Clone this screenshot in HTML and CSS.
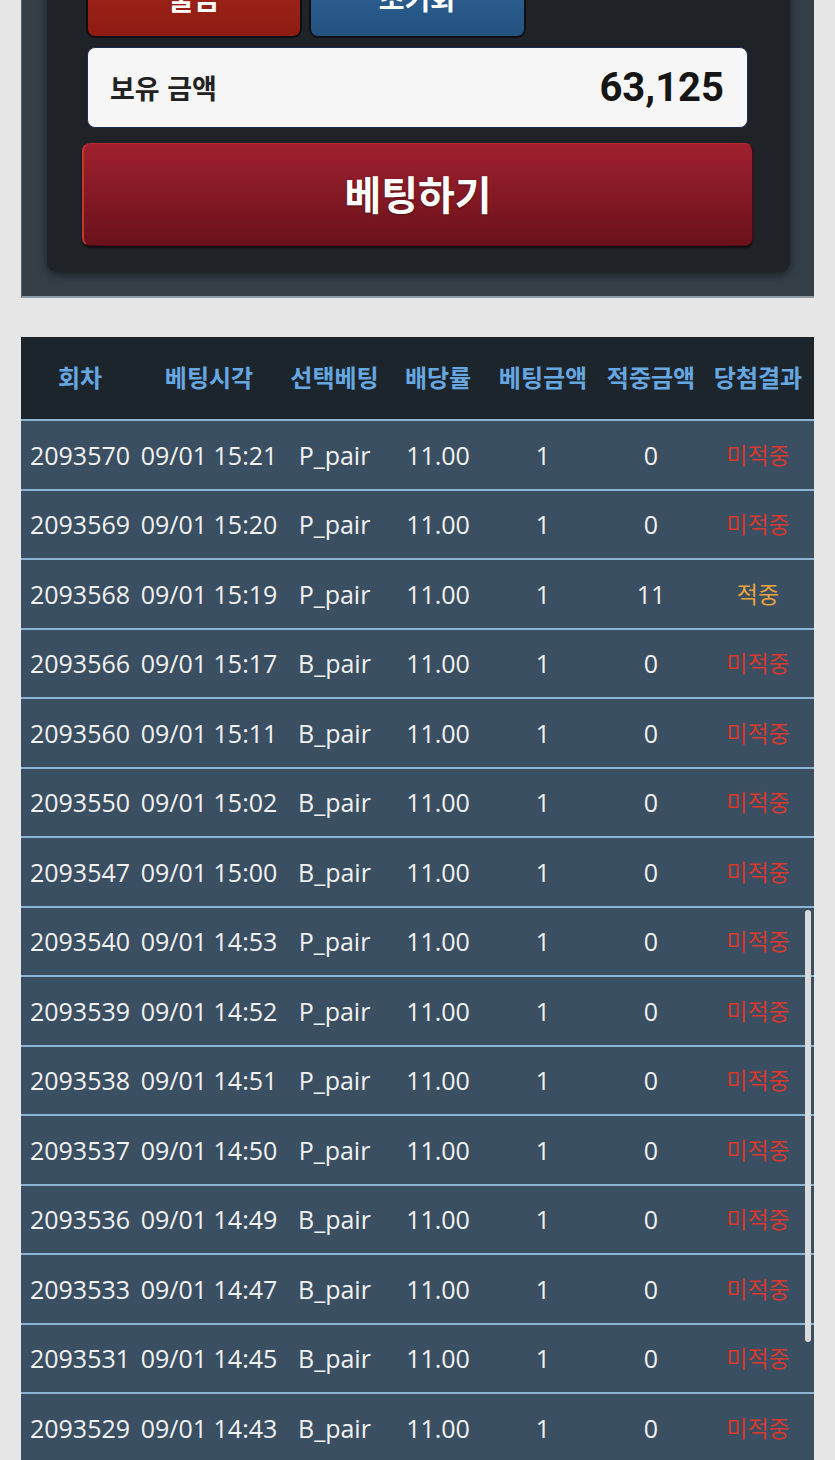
FILE: index.html
```html
<!DOCTYPE html>
<html lang="ko">
<head>
<meta charset="utf-8">
<title>베팅</title>
<link rel="stylesheet" href="styles.css">
</head>
<body>
<div class="page">
  <section class="panel-outer">
    <div class="panel-inner">
      <div class="btn-row">
        <button class="btn btn-red">출금</button>
        <button class="btn btn-blue">초기화</button>
      </div>
      <div class="balance">
        <span class="balance-label">보유 금액</span>
        <span class="balance-amount">63,125</span>
      </div>
      <button class="bet-btn">베팅하기</button>
    </div>
  </section>

  <section class="history">
    <div class="row head">
      <div>회차</div><div>베팅시각</div><div>선택베팅</div><div>배당률</div><div>베팅금액</div><div>적중금액</div><div>당첨결과</div>
    </div>
    <div class="row"><div>2093570</div><div>09/01 15:21</div><div>P_pair</div><div>11.00</div><div>1</div><div>0</div><div class="lose">미적중</div></div>
    <div class="row"><div>2093569</div><div>09/01 15:20</div><div>P_pair</div><div>11.00</div><div>1</div><div>0</div><div class="lose">미적중</div></div>
    <div class="row"><div>2093568</div><div>09/01 15:19</div><div>P_pair</div><div>11.00</div><div>1</div><div>11</div><div class="win">적중</div></div>
    <div class="row"><div>2093566</div><div>09/01 15:17</div><div>B_pair</div><div>11.00</div><div>1</div><div>0</div><div class="lose">미적중</div></div>
    <div class="row"><div>2093560</div><div>09/01 15:11</div><div>B_pair</div><div>11.00</div><div>1</div><div>0</div><div class="lose">미적중</div></div>
    <div class="row"><div>2093550</div><div>09/01 15:02</div><div>B_pair</div><div>11.00</div><div>1</div><div>0</div><div class="lose">미적중</div></div>
    <div class="row"><div>2093547</div><div>09/01 15:00</div><div>B_pair</div><div>11.00</div><div>1</div><div>0</div><div class="lose">미적중</div></div>
    <div class="row"><div>2093540</div><div>09/01 14:53</div><div>P_pair</div><div>11.00</div><div>1</div><div>0</div><div class="lose">미적중</div></div>
    <div class="row"><div>2093539</div><div>09/01 14:52</div><div>P_pair</div><div>11.00</div><div>1</div><div>0</div><div class="lose">미적중</div></div>
    <div class="row"><div>2093538</div><div>09/01 14:51</div><div>P_pair</div><div>11.00</div><div>1</div><div>0</div><div class="lose">미적중</div></div>
    <div class="row"><div>2093537</div><div>09/01 14:50</div><div>P_pair</div><div>11.00</div><div>1</div><div>0</div><div class="lose">미적중</div></div>
    <div class="row"><div>2093536</div><div>09/01 14:49</div><div>B_pair</div><div>11.00</div><div>1</div><div>0</div><div class="lose">미적중</div></div>
    <div class="row"><div>2093533</div><div>09/01 14:47</div><div>B_pair</div><div>11.00</div><div>1</div><div>0</div><div class="lose">미적중</div></div>
    <div class="row"><div>2093531</div><div>09/01 14:45</div><div>B_pair</div><div>11.00</div><div>1</div><div>0</div><div class="lose">미적중</div></div>
    <div class="row"><div>2093529</div><div>09/01 14:43</div><div>B_pair</div><div>11.00</div><div>1</div><div>0</div><div class="lose">미적중</div></div>
    <div class="scrollbar"></div>
  </section>
</div>
</body>
</html>
```

FILE: styles.css
```css
html, body {
  margin: 0;
  padding: 0;
  overflow: hidden;
  background: #e6e6e6;
}

.page {
  font-family: "Open Sans", "Noto Sans CJK KR", sans-serif;
  padding-left: 21px;
  width: 793px;
}

/* ---------- top panel ---------- */
.panel-outer {
  margin-top: -74px;
  background: #343f48;
  padding: 20px 24px 24px 25px;
  border-bottom: 2px solid #8c9ba7;
  border-left: 1px solid #56636e;
  box-sizing: border-box;
  width: 793px;
}

.panel-inner {
  background: #1f2328;
  border-radius: 10px;
  box-shadow: 0 3px 10px rgba(0, 0, 0, 0.5);
  padding: 20px 37px 26px 35px;
  display: flex;
  flex-direction: column;
}

.btn-row {
  display: flex;
  gap: 7px;
  margin-left: 4px;
}

.btn {
  height: 72px;
  border: 2px solid #0e0f10;
  border-radius: 9px;
  color: #fff;
  font-family: "Noto Sans CJK KR", sans-serif;
  font-weight: 700;
  font-size: 28px;
  padding: 0 0 9px 0;
}

.btn-red {
  width: 216px;
  background: linear-gradient(#a52519, #8d1c13);
}

.btn-blue {
  width: 217px;
  background: linear-gradient(#2f6399, #24527f);
}

.balance {
  margin: 9px 5px 0 5px;
  height: 81px;
  box-sizing: border-box;
  background: #f6f6f6;
  border: 1px solid #1b2a4e;
  border-radius: 8px;
  display: flex;
  align-items: center;
  justify-content: space-between;
  padding: 0 23px 0 22px;
}

.balance-label {
  font-family: "Noto Sans CJK KR", sans-serif;
  font-weight: 700;
  font-size: 27px;
  color: #222;
}

.balance-amount {
  font-family: Roboto, sans-serif;
  font-weight: 700;
  font-size: 40px;
  color: #151515;
}

.bet-btn {
  margin-top: 15px;
  height: 103px;
  border: 1px solid #4e0b10;
  border-left: 2px solid #c0382c;
  border-top: 1px solid #b02a2f;
  border-radius: 8px;
  background: linear-gradient(#9f202e, #6a121b);
  box-shadow: 0 2px 2px rgba(0, 0, 0, 0.6);
  color: #fff;
  font-family: "Noto Sans CJK KR", sans-serif;
  font-weight: 700;
  font-size: 40px;
  text-shadow: 0 1px 2px rgba(0, 0, 0, 0.4);
  padding: 0 0 4px 0;
}

/* ---------- history table ---------- */
.history {
  margin-top: 39px;
  position: relative;
  width: 793px;
  background: #3b4f63;
}

.row {
  display: grid;
  grid-template-columns: 118px 140px 111px 96px 114px 102px 112px;
  height: 69.5px;
  box-sizing: border-box;
  border-top: 2px solid #8cb5d3;
  background: #3b4f63;
  color: #f2f2f2;
  font-size: 25px;
  align-items: center;
  text-align: center;
  white-space: nowrap;
}

.row.head {
  height: 82px;
  padding-bottom: 4px;
  border-top: none;
  background: #1c242c;
  color: #66a7e1;
  font-family: "Noto Sans CJK KR", sans-serif;
  font-weight: 700;
  font-size: 24px;
}

.lose,
.win {
  font-family: "Noto Sans CJK KR", sans-serif;
  font-size: 23px;
  padding-bottom: 2px;
}

.lose { color: #d8382d; }
.win { color: #e8a43c; }

.scrollbar {
  position: absolute;
  left: 784px;
  top: 573px;
  width: 6px;
  height: 432px;
  border-radius: 3px;
  background: #d9dbdd;
}
```
